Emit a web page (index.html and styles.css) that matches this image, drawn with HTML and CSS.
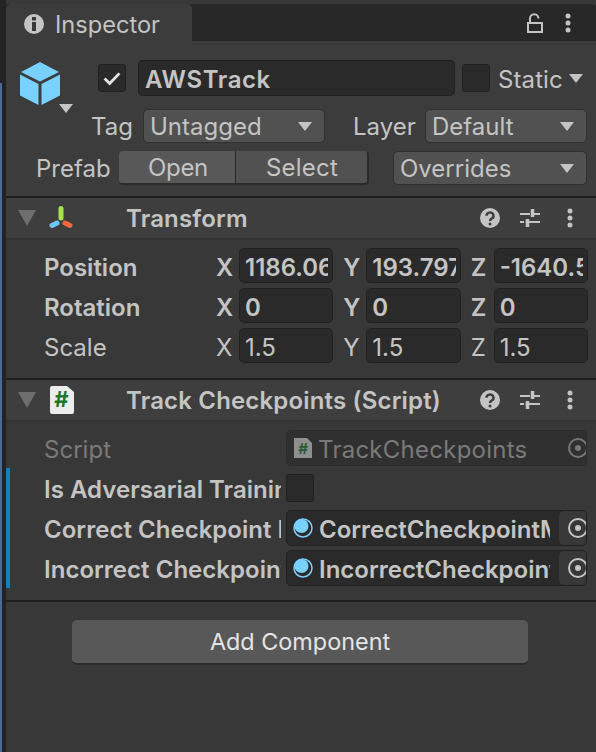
FILE: index.html
```html
<!DOCTYPE html>
<html>

<head>
    <title>Inspector</title>
    <link rel="stylesheet" href="styles.css">
</head>

<body>
    <div class="edge"></div>
    <div class="window">
        <div class="tabbar">
            <div class="tab">
                <svg class="tab-icon" viewBox="0 0 20 20">
                    <circle cx="10" cy="10" r="10" fill="#c4c4c4"></circle>
                    <rect x="8" y="3" width="4" height="3.5" fill="#383838"></rect>
                    <rect x="8" y="8" width="4" height="9" fill="#383838"></rect>
                </svg>
                <span class="tab-label">Inspector</span>
            </div>
            <div class="tabbar-tools">
                <svg class="lock" viewBox="0 0 16 20">
                    <path d="M3 9V5.5a4.2 4.2 0 0 1 8.4 0" fill="none" stroke="#c4c4c4" stroke-width="2"></path>
                    <rect x="1" y="10" width="14" height="9" fill="none" stroke="#c4c4c4" stroke-width="2"></rect>
                </svg>
                <svg class="dots" viewBox="0 0 6 20">
                    <circle cx="3" cy="3" r="2.5"></circle>
                    <circle cx="3" cy="10" r="2.5"></circle>
                    <circle cx="3" cy="17" r="2.5"></circle>
                </svg>
            </div>
        </div>

        <div class="object">
            <div class="object-top">
                <div class="object-icon">
                    <svg class="cube" viewBox="0 0 40 43">
                        <path d="M20 0 39 10 20 19.5 1 10Z" fill="#79d1ff"></path>
                        <path d="M0 12.5 18.5 22V43L0 33.5Z" fill="#79d1ff"></path>
                        <path d="M40 12.5 21.5 22V43L40 33.5Z" fill="#79d1ff"></path>
                    </svg>
                    <span class="arrow arrow-icon"></span>
                </div>
                <div class="object-rows">
                    <div class="name-row">
                        <div class="check">
                            <svg viewBox="0 0 28 28">
                                <path d="M6 14.5 11.500 20 22 9" fill="none" stroke="#e4e4e4" stroke-width="3"></path>
                            </svg>
                        </div>
                        <div class="name-input">AWSTrack</div>
                        <div class="check"></div>
                        <span class="static-label">Static</span>
                        <span class="arrow"></span>
                    </div>
                    <div class="tag-row">
                        <span class="tag-label">Tag</span>
                        <div class="dropdown dropdown-tag"><span>Untagged</span><span class="arrow"></span></div>
                        <span class="layer-label">Layer</span>
                        <div class="dropdown dropdown-layer"><span>Default</span><span class="arrow"></span></div>
                    </div>
                </div>
            </div>
            <div class="prefab-row">
                <span class="prefab-label">Prefab</span>
                <div class="prefab-btn prefab-open">Open</div>
                <div class="prefab-btn prefab-select">Select</div>
                <div class="dropdown dropdown-overrides"><span>Overrides</span><span class="arrow"></span></div>
            </div>
        </div>

        <div class="comp-head">
            <span class="fold"></span>
            <svg class="comp-icon" viewBox="0 0 26 26">
                <path d="M13 3.500V13" stroke="#a5e34c" stroke-width="5" stroke-linecap="round"></path>
                <path d="M4 20.500 9 18" stroke="#6cc8ff" stroke-width="5" stroke-linecap="round"></path>
                <path d="M22 20.500 17 18" stroke="#f2683a" stroke-width="5" stroke-linecap="round"></path>
            </svg>
            <span class="comp-title">Transform</span>
            <div class="comp-tools">
                <svg class="help" viewBox="0 0 20 20">
                    <circle cx="10" cy="10" r="10" fill="#c4c4c4"></circle>
                    <path d="M6.500 7.800a3.500 3.200 0 1 1 5.200 2.700c-1.200.8-1.700 1.200-1.700 2.500" fill="none" stroke="#3e3e3e" stroke-width="2.400"></path>
                    <circle cx="10" cy="16" r="1.500" fill="#3e3e3e"></circle>
                </svg>
                <svg class="sliders" viewBox="0 0 20 20">
                    <path d="M0 6H20M0 14H20" stroke="#c4c4c4" stroke-width="2"></path>
                    <path d="M12.500 1V9M7.500 11V19" stroke="#c4c4c4" stroke-width="3.500"></path>
                    <path d="M10 6H10.800M4 14H5.500" stroke="#3e3e3e" stroke-width="2"></path>
                </svg>
                <svg class="dots" viewBox="0 0 6 20">
                    <circle cx="3" cy="3" r="2.500"></circle>
                    <circle cx="3" cy="10" r="2.500"></circle>
                    <circle cx="3" cy="17" r="2.500"></circle>
                </svg>
            </div>
        </div>
        <div class="comp-body transform-body">
            <div class="vec-row">
                <span class="vec-label bold">Position</span>
                <div class="vec bold"><span class="axis">X</span><div class="field"><span class="clip">1186.069</span></div></div>
                <div class="vec bold"><span class="axis">Y</span><div class="field"><span class="clip">193.7978</span></div></div>
                <div class="vec bold"><span class="axis">Z</span><div class="field"><span class="clip">-1640.535</span></div></div>
            </div>
            <div class="vec-row">
                <span class="vec-label bold">Rotation</span>
                <div class="vec bold"><span class="axis">X</span><div class="field"><span class="clip">0</span></div></div>
                <div class="vec bold"><span class="axis">Y</span><div class="field"><span class="clip">0</span></div></div>
                <div class="vec bold"><span class="axis">Z</span><div class="field"><span class="clip">0</span></div></div>
            </div>
            <div class="vec-row">
                <span class="vec-label">Scale</span>
                <div class="vec"><span class="axis">X</span><div class="field"><span class="clip">1.5</span></div></div>
                <div class="vec"><span class="axis">Y</span><div class="field"><span class="clip">1.5</span></div></div>
                <div class="vec"><span class="axis">Z</span><div class="field"><span class="clip">1.5</span></div></div>
            </div>
        </div>

        <div class="comp-head">
            <span class="fold"></span>
            <svg class="comp-icon script-icon" viewBox="0 0 24 28">
                <path d="M2 0H17L24 6V26a2 2 0 0 1-2 2H2a2 2 0 0 1-2-2V2a2 2 0 0 1 2-2Z" fill="#ececec"></path>
                <text x="11.500" y="21" class="hash">#</text>
            </svg>
            <span class="comp-title">Track Checkpoints (Script)</span>
            <div class="comp-tools">
                <svg class="help" viewBox="0 0 20 20">
                    <circle cx="10" cy="10" r="10" fill="#c4c4c4"></circle>
                    <path d="M6.500 7.800a3.500 3.200 0 1 1 5.200 2.700c-1.200.8-1.700 1.200-1.700 2.500" fill="none" stroke="#3e3e3e" stroke-width="2.400"></path>
                    <circle cx="10" cy="16" r="1.500" fill="#3e3e3e"></circle>
                </svg>
                <svg class="sliders" viewBox="0 0 20 20">
                    <path d="M0 6H20M0 14H20" stroke="#c4c4c4" stroke-width="2"></path>
                    <path d="M12.500 1V9M7.500 11V19" stroke="#c4c4c4" stroke-width="3.500"></path>
                    <path d="M10 6H10.800M4 14H5.500" stroke="#3e3e3e" stroke-width="2"></path>
                </svg>
                <svg class="dots" viewBox="0 0 6 20">
                    <circle cx="3" cy="3" r="2.500"></circle>
                    <circle cx="3" cy="10" r="2.500"></circle>
                    <circle cx="3" cy="17" r="2.500"></circle>
                </svg>
            </div>
        </div>
        <div class="comp-body script-body">
            <div class="prop-row">
                <span class="prop-label dim">Script</span>
                <div class="obj-field dim-field">
                    <svg class="small-script" viewBox="0 0 18 20">
                        <path d="M0 0H13L18 5V20H0Z" fill="#8f8f8f"></path>
                        <text x="9" y="15.500" class="hash hash-small">#</text>
                    </svg>
                    <span class="obj-name script-name dim">TrackCheckpoints</span>
                    <div class="picker">
                        <svg viewBox="0 0 20 20">
                            <circle cx="10" cy="10" r="9" fill="none" stroke="#777" stroke-width="2"></circle>
                            <circle cx="10" cy="10" r="3" fill="#777"></circle>
                        </svg>
                    </div>
                </div>
            </div>
            <div class="modified">
                <div class="prop-row">
                    <span class="prop-label bold">Is Adversarial Training</span>
                    <div class="check"></div>
                </div>
                <div class="prop-row">
                    <span class="prop-label bold">Correct Checkpoint Manager</span>
                    <div class="obj-field">
                        <svg class="ring" viewBox="0 0 20 20">
                            <circle cx="10" cy="10" r="9" fill="#2a2a2a" stroke="#79d1ff" stroke-width="1.500"></circle>
                            <circle cx="8.500" cy="8" r="7" fill="#79d1ff"></circle>
                        </svg>
                        <span class="obj-name bold">CorrectCheckpointManager</span>
                        <div class="picker picker-on">
                            <svg viewBox="0 0 20 20">
                                <circle cx="10" cy="10" r="9" fill="none" stroke="#c4c4c4" stroke-width="2"></circle>
                                <circle cx="10" cy="10" r="3" fill="#c4c4c4"></circle>
                            </svg>
                        </div>
                    </div>
                </div>
                <div class="prop-row">
                    <span class="prop-label bold">Incorrect Checkpoint Manager</span>
                    <div class="obj-field">
                        <svg class="ring" viewBox="0 0 20 20">
                            <circle cx="10" cy="10" r="9" fill="#2a2a2a" stroke="#79d1ff" stroke-width="1.500"></circle>
                            <circle cx="8.500" cy="8" r="7" fill="#79d1ff"></circle>
                        </svg>
                        <span class="obj-name bold">IncorrectCheckpointManager</span>
                        <div class="picker picker-on">
                            <svg viewBox="0 0 20 20">
                                <circle cx="10" cy="10" r="9" fill="none" stroke="#c4c4c4" stroke-width="2"></circle>
                                <circle cx="10" cy="10" r="3" fill="#c4c4c4"></circle>
                            </svg>
                        </div>
                    </div>
                </div>
            </div>
        </div>

        <div class="footer">
            <div class="add-btn">Add Component</div>
        </div>
    </div>
</body>

</html>
```

FILE: styles.css
```css
html, body {
    height: 100%;
}

body {
    display: flex;
    margin: 0;
    overflow: hidden;
    background-color: #232323;
    font-family: Inter, "Liberation Sans", sans-serif;
    font-size: 24px;
    color: #c4c4c4;
}

svg {
    display: block;
    flex: none;
}

.bold {
    font-weight: 600;
}

.dim {
    color: #7a7a7a;
}

.edge {
    flex: none;
    width: 2px;
    height: 669px;
    margin-top: 83px;
    margin-right: 4px;
    background-color: #4a6a9a;
}

.window {
    flex: 1;
    min-width: 0;
    background-color: #383838;
}

.tabbar {
    display: flex;
    justify-content: space-between;
    height: 37px;
    padding-top: 4px;
    background-color: #282828;
    border-top-right-radius: 6px;
    background-clip: content-box;
}

.tab {
    display: flex;
    align-items: center;
    width: 186px;
    height: 37px;
    padding-left: 18px;
    padding-top: 2px;
    box-sizing: border-box;
    background-color: #3c3c3c;
    border-radius: 5px 5px 0 0;
}

.tab-icon {
    width: 20px;
    height: 20px;
    margin-right: 11px;
}

.tab-label {
    padding-top: 2px;
    font-size: 23.600px;
}

.tabbar-tools {
    display: flex;
    align-items: center;
    padding-right: 25px;
}

.lock {
    width: 16px;
    height: 20px;
    margin-right: 22px;
}

.dots {
    width: 6px;
    height: 20px;
    fill: #c4c4c4;
}

.arrow {
    flex: none;
    width: 0;
    height: 0;
    border-left: 7px solid transparent;
    border-right: 7px solid transparent;
    border-top: 9px solid #c4c4c4;
}

.object {
    height: 136px;
    padding-top: 19px;
    background-color: #3c3c3c;
    border-bottom: 2px solid #1f1f1f;
}

.object-top {
    display: flex;
}

.object-icon {
    flex: none;
    display: flex;
    width: 85px;
    padding-left: 14px;
    padding-top: 2px;
    box-sizing: border-box;
}

.cube {
    width: 40px;
    height: 43px;
}

.arrow-icon {
    margin-top: 42px;
    margin-left: -1px;
}

.object-rows {
    flex: 1;
    min-width: 0;
}

.name-row {
    display: flex;
    align-items: center;
    height: 36px;
    padding-left: 7px;
}

.check {
    flex: none;
    width: 26px;
    height: 26px;
    background-color: #2a2a2a;
    border: 1px solid #212121;
    border-radius: 3px;
}

.name-input {
    flex: none;
    width: 309px;
    height: 34px;
    margin-left: 12px;
    margin-right: 7px;
    padding-left: 6px;
    line-height: 38px;
    letter-spacing: 0.6px;
    font-weight: 600;
    background-color: #2a2a2a;
    border: 1px solid #212121;
    border-top-color: #1b1b1b;
    border-radius: 5px;
}

.static-label {
    margin-left: 8px;
    margin-right: 6px;
    padding-top: 2px;
    letter-spacing: 0.1px;
}

.tag-row {
    display: flex;
    align-items: center;
    height: 34px;
    margin-top: 13px;
}

.tag-label {
    width: 44px;
    margin-right: 8px;
}

.layer-label {
    width: 64px;
    margin-left: 28px;
    margin-right: 8px;
}

.dropdown {
    flex: none;
    display: flex;
    align-items: center;
    justify-content: space-between;
    height: 34px;
    padding: 0 12px 0 6px;
    box-sizing: border-box;
    background-color: #515151;
    border: 1px solid #303030;
    border-radius: 5px;
}

.dropdown-tag {
    width: 182px;
}

.dropdown-layer {
    width: 162px;
}

.dropdown-overrides {
    width: 194px;
    margin-left: 24px;
}

.prefab-row {
    display: flex;
    align-items: center;
    height: 34px;
    margin-top: 8px;
    padding-left: 30px;
}

.prefab-label {
    width: 83px;
}

.prefab-btn {
    flex: none;
    height: 34px;
    line-height: 34px;
    text-align: center;
    box-sizing: border-box;
    border-bottom: 2px solid #2b2b2b;
}

.prefab-open {
    width: 117px;
    padding-left: 2px;
    letter-spacing: -0.3px;
    background-color: #585858;
    border-right: 1px solid #262626;
    border-radius: 4px 0 0 4px;
}

.prefab-select {
    width: 133px;
    padding-left: 1px;
    letter-spacing: 0.2px;
    background-color: #515151;
    border-right: 2px solid #2b2b2b;
    border-radius: 0 4px 4px 0;
}

.comp-head {
    display: flex;
    align-items: center;
    height: 40px;
    padding-left: 12px;
    background-color: #3e3e3e;
    border-bottom: 2px solid #333;
}

.fold {
    flex: none;
    width: 0;
    height: 0;
    border-left: 9px solid transparent;
    border-right: 9px solid transparent;
    border-top: 16px solid #6e6e6e;
}

.comp-icon {
    width: 26px;
    height: 26px;
    margin-left: 12px;
}

.script-icon {
    width: 24px;
    height: 28px;
    margin-left: 14px;
}

.comp-title {
    flex: 1;
    min-width: 0;
    margin-left: 52px;
    letter-spacing: 0.17px;
    font-weight: 600;
}

.comp-tools {
    display: flex;
    align-items: center;
    padding-right: 23px;
}

.help {
    width: 20px;
    height: 20px;
    margin-right: 20px;
}

.sliders {
    width: 20px;
    height: 20px;
    margin-right: 27px;
}

.comp-body {
    border-bottom: 2px solid #1f1f1f;
}

.transform-body {
    height: 130px;
    padding-top: 8px;
}

.vec-row {
    display: flex;
    align-items: center;
    height: 35px;
    margin-bottom: 5px;
    padding-left: 38px;
    padding-right: 8px;
}

.vec-label {
    flex: none;
    width: 173px;
    padding-top: 3px;
}

.vec {
    flex: 1;
    display: flex;
    align-items: center;
    min-width: 0;
    margin-right: 11px;
}

.vec:last-child {
    margin-right: 0;
}

.axis {
    flex: none;
    width: 23px;
    margin-left: -1px;
    padding-top: 3px;
}

.field {
    flex: 1;
    min-width: 0;
    height: 35px;
    padding: 0 4px 0 5px;
    line-height: 37px;
    box-sizing: border-box;
    background-color: #2a2a2a;
    border: 1px solid #212121;
    border-radius: 5px;
}

.clip {
    display: block;
    overflow: hidden;
    white-space: nowrap;
}

.script-body {
    height: 170px;
    padding-top: 8px;
}

.prop-row {
    display: flex;
    align-items: center;
    height: 36px;
    margin-bottom: 4px;
    padding-left: 38px;
    padding-right: 9px;
}

.modified {
    margin-top: -2px;
    padding-top: 2px;
    padding-bottom: 2px;
    border-left: 4px solid #0f81be;
}

.modified .prop-row {
    padding-left: 34px;
}

.modified .prop-row:last-child {
    margin-bottom: 0;
}

.prop-label {
    flex: none;
    width: 237px;
    margin-right: 5px;
    padding-top: 2px;
    letter-spacing: 0.03px;
    overflow: hidden;
    white-space: nowrap;
}

.obj-field {
    flex: 1;
    display: flex;
    align-items: center;
    min-width: 0;
    height: 36px;
    padding-left: 7px;
    box-sizing: border-box;
    background-color: #2a2a2a;
    border: 1px solid #212121;
    border-radius: 5px;
    overflow: hidden;
}

.dim-field {
    background-color: #303030;
    border-color: #2b2b2b;
}

.small-script {
    width: 18px;
    height: 20px;
}

.ring {
    width: 20px;
    height: 20px;
    margin-left: -1px;
}

.obj-name {
    flex: 1;
    min-width: 0;
    margin-left: 6px;
    margin-right: 9px;
    padding-top: 2px;
    overflow: hidden;
    white-space: nowrap;
}

.script-name {
    margin-left: 6px;
    letter-spacing: 0.25px;
}

.picker {
    flex: none;
    display: flex;
    align-items: center;
    justify-content: flex-end;
    width: 27px;
    height: 34px;
}

.picker svg {
    width: 20px;
    height: 20px;
    margin-right: -2px;
}

.picker-on {
    background-color: #383838;
    border-radius: 5px 0 0 5px;
}

.hash {
    font-size: 22px;
    font-weight: 700;
    fill: #1e7a2a;
    text-anchor: middle;
}

.hash-small {
    font-size: 15px;
    fill: #2c5c33;
}

.footer {
    padding-top: 18px;
}

.add-btn {
    width: 456px;
    height: 45px;
    margin-left: 66px;
    line-height: 43px;
    font-size: 23.4px;
    text-align: center;
    color: #e4e4e4;
    background-color: #585858;
    border-bottom: 2px solid #2b2b2b;
    border-radius: 5px;
    box-sizing: border-box;
}
```
